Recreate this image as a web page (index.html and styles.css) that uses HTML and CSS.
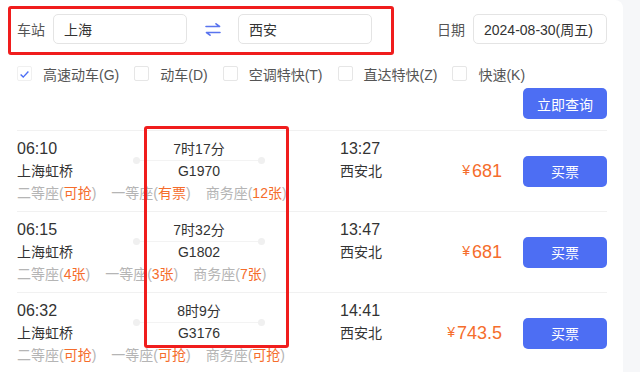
FILE: index.html
```html
<!DOCTYPE html>
<html lang="zh-CN">
<head>
    <meta charset="UTF-8">
    <meta name="viewport" content="width=device-width, initial-scale=1.0">
    <title>车票查询</title>
    <link rel="stylesheet" href="styles.css">
</head>
<body>
    <div class="page">
        <div class="card">
            <div class="field-row">
                <span class="label">车站</span>
                <input class="input" type="text" value="上海" readonly>
                <span class="swap">
                    <svg width="16" height="13" viewBox="0 0 16 13">
                        <path d="M1 3.5H14.5M11 0.8L14.5 3.5" fill="none" stroke="#5a74ee" stroke-width="1.6" stroke-linecap="round"/>
                        <path d="M15 9.5H1.5M5 12.2L1.5 9.5" fill="none" stroke="#5a74ee" stroke-width="1.6" stroke-linecap="round"/>
                    </svg>
                </span>
                <input class="input" type="text" value="西安" readonly>
                <span class="label date-label">日期</span>
                <input class="input" type="text" value="2024-08-30(周五)" readonly>
            </div>

            <div class="check-row">
                <label class="check"><span class="box checked">
                    <svg width="15" height="15" viewBox="0 0 15 15"><path d="M3 7.5L6 10.5L12 4" fill="none" stroke="#4c6ef5" stroke-width="1.6"/></svg>
                </span>高速动车(G)</label>
                <label class="check"><span class="box"></span>动车(D)</label>
                <label class="check"><span class="box"></span>空调特快(T)</label>
                <label class="check"><span class="box"></span>直达特快(Z)</label>
                <label class="check"><span class="box"></span>快速(K)</label>
            </div>

            <div class="action-row">
                <button class="btn btn-search">立即查询</button>
            </div>

            <ul class="trains">
                <li class="train">
                    <div class="info">
                        <div class="top">
                            <div class="dep">
                                <div class="time">06:10</div>
                                <div>上海虹桥</div>
                            </div>
                            <div class="mid">
                                <i class="track"></i>
                                <div>7时17分</div>
                                <div>G1970</div>
                            </div>
                            <div class="arr">
                                <div class="time">13:27</div>
                                <div>西安北</div>
                            </div>
                        </div>
                        <div class="seats">
                            <span>二等座(<em>可抢</em>)</span>
                            <span>一等座(<em>有票</em>)</span>
                            <span>商务座(<em>12张</em>)</span>
                        </div>
                    </div>
                    <div class="price"><small>¥</small>681</div>
                    <button class="btn btn-buy">买票</button>
                </li>
                <li class="train">
                    <div class="info">
                        <div class="top">
                            <div class="dep">
                                <div class="time">06:15</div>
                                <div>上海虹桥</div>
                            </div>
                            <div class="mid">
                                <i class="track"></i>
                                <div>7时32分</div>
                                <div>G1802</div>
                            </div>
                            <div class="arr">
                                <div class="time">13:47</div>
                                <div>西安北</div>
                            </div>
                        </div>
                        <div class="seats">
                            <span>二等座(<em>4张</em>)</span>
                            <span>一等座(<em>3张</em>)</span>
                            <span>商务座(<em>7张</em>)</span>
                        </div>
                    </div>
                    <div class="price"><small>¥</small>681</div>
                    <button class="btn btn-buy">买票</button>
                </li>
                <li class="train">
                    <div class="info">
                        <div class="top">
                            <div class="dep">
                                <div class="time">06:32</div>
                                <div>上海虹桥</div>
                            </div>
                            <div class="mid">
                                <i class="track"></i>
                                <div>8时9分</div>
                                <div>G3176</div>
                            </div>
                            <div class="arr">
                                <div class="time">14:41</div>
                                <div>西安北</div>
                            </div>
                        </div>
                        <div class="seats">
                            <span>二等座(<em>可抢</em>)</span>
                            <span>一等座(<em>可抢</em>)</span>
                            <span>商务座(<em>可抢</em>)</span>
                        </div>
                    </div>
                    <div class="price"><small>¥</small>743.5</div>
                    <button class="btn btn-buy">买票</button>
                </li>
            </ul>
        </div>

        <div class="mark mark-station"></div>
        <div class="mark mark-middle"></div>
    </div>
</body>
</html>
```

FILE: styles.css
```css
body {
    margin: 0;
    background: #f6f7f9;
    font-family: "Liberation Sans", "Noto Sans CJK SC", sans-serif;
    font-size: 14px;
    color: #333;
}
.page {
    position: relative;
    height: 372px;
    overflow: hidden;
}
.card {
    width: 623px;
    box-sizing: border-box;
    min-height: 372px;
    background: #fff;
    border-radius: 0 8px 0 0;
    padding: 14px 16px 0 17px;
}
.field-row {
    display: flex;
    align-items: center;
    height: 30px;
}
.label {
    color: #555;
    margin-right: 8px;
}
.date-label {
    margin-left: auto;
}
.input {
    width: 134px;
    height: 30px;
    box-sizing: border-box;
    border: 1px solid #e4e4e4;
    border-radius: 5px;
    padding: 0 10px;
    font-family: inherit;
    font-size: 14px;
    color: #333;
    outline: none;
}
.swap {
    width: 51px;
    display: flex;
    justify-content: center;
    align-items: center;
}
.check-row {
    display: flex;
    align-items: center;
    margin-top: 21px;
    height: 17px;
}
.check {
    display: flex;
    align-items: center;
    margin-right: 15px;
    color: #555;
}
.box {
    width: 15px;
    height: 15px;
    box-sizing: border-box;
    border: 1px solid #e6e6e6;
    border-radius: 2px;
    margin-right: 11px;
    display: flex;
}
.box.checked {
    border-color: #f0f0f0;
}
.action-row {
    display: flex;
    justify-content: flex-end;
    margin-top: 6px;
}
.btn {
    width: 84px;
    height: 31px;
    border: none;
    border-radius: 5px;
    background: #4d6ef3;
    color: #fff;
    font-family: inherit;
    font-size: 14px;
    cursor: pointer;
}
.btn:hover {
    background: #3d5ee6;
}
.trains {
    list-style: none;
    margin: 11px 0 0;
    padding: 0;
}
.train {
    display: flex;
    align-items: center;
    border-top: 1px solid #f1f1f1;
    padding: 7px 0;
}
.info {
    display: flex;
    flex-direction: column;
    line-height: 22px;
}
.top {
    display: flex;
}
.time {
    font-size: 16px;
}
.dep {
    width: 116px;
}
.mid {
    position: relative;
    width: 132px;
    text-align: center;
}
.track {
    position: absolute;
    left: 3px;
    right: 3px;
    top: 22px;
    height: 1px;
    background: #f3f3f3;
}
.track::before,
.track::after {
    content: "";
    position: absolute;
    top: -3px;
    width: 7px;
    height: 7px;
    border-radius: 50%;
    background: #f0f0f0;
}
.track::before {
    left: -3px;
}
.track::after {
    right: -3px;
}
.arr {
    margin-left: 75px;
}
.seats {
    display: flex;
    gap: 15px;
    color: #b5b5b5;
}
.seats em {
    font-style: normal;
    color: #f56d2c;
}
.price {
    margin-left: auto;
    margin-right: 21px;
    color: #f56d2c;
    font-size: 18px;
}
.price small {
    font-size: 14px;
    margin-right: 2px;
    position: relative;
    top: -2px;
}
.mark {
    position: absolute;
    box-sizing: border-box;
    border: 3px solid #f01d1d;
    border-radius: 3px;
}
.mark-station {
    left: 8px;
    top: 6px;
    width: 386px;
    height: 49px;
}
.mark-middle {
    left: 144px;
    top: 126px;
    width: 145px;
    height: 222px;
}
```
